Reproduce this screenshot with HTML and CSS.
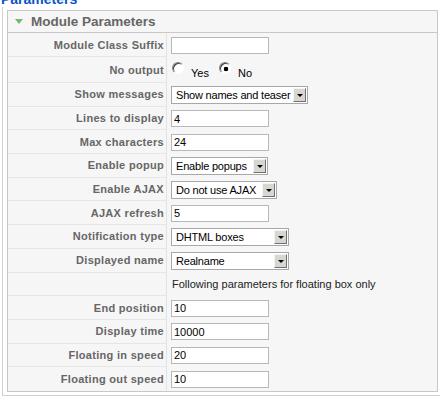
FILE: index.html
```html
<!DOCTYPE html>
<html lang="en">

<head>
    <meta charset="UTF-8" />
    <title>Module Parameters</title>
    <link rel="stylesheet" href="styles.css">
</head>

<body>
    <div class="legend">Parameters</div>
    <div class="fieldset">
        <div class="panel">
            <h3 class="panel-title"><span class="arrow"></span>Module Parameters</h3>
            <div class="params">
                <div class="key">Module Class Suffix</div>
                <div class="value"><input class="text" type="text" value=""></div>

                <div class="key">No output</div>
                <div class="value radios">
                    <input class="radio" type="radio" name="nooutput">
                    <label>Yes</label>
                    <input class="radio" type="radio" name="nooutput" checked>
                    <label>No</label>
                </div>

                <div class="key">Show messages</div>
                <div class="value">
                    <span class="select w-show"><span class="select-text">Show names and teaser</span><span class="select-btn"></span></span>
                </div>

                <div class="key">Lines to display</div>
                <div class="value"><input class="text" type="text" value="4"></div>

                <div class="key">Max characters</div>
                <div class="value"><input class="text" type="text" value="24"></div>

                <div class="key">Enable popup</div>
                <div class="value">
                    <span class="select w-popup"><span class="select-text">Enable popups</span><span class="select-btn"></span></span>
                </div>

                <div class="key">Enable AJAX</div>
                <div class="value">
                    <span class="select w-ajax"><span class="select-text">Do not use AJAX</span><span class="select-btn"></span></span>
                </div>

                <div class="key">AJAX refresh</div>
                <div class="value"><input class="text" type="text" value="5"></div>

                <div class="key">Notification type</div>
                <div class="value">
                    <span class="select w-wide"><span class="select-text">DHTML boxes</span><span class="select-btn"></span></span>
                </div>

                <div class="key">Displayed name</div>
                <div class="value">
                    <span class="select w-wide"><span class="select-text">Realname</span><span class="select-btn"></span></span>
                </div>

                <div class="key"></div>
                <div class="value note">Following parameters for floating box only</div>

                <div class="key">End position</div>
                <div class="value"><input class="text" type="text" value="10"></div>

                <div class="key">Display time</div>
                <div class="value"><input class="text" type="text" value="10000"></div>

                <div class="key">Floating in speed</div>
                <div class="value"><input class="text" type="text" value="20"></div>

                <div class="key last">Floating out speed</div>
                <div class="value"><input class="text" type="text" value="10"></div>
            </div>
        </div>
    </div>
</body>

</html>
```

FILE: styles.css
```css
* {
    margin: 0;
    padding: 0;
    box-sizing: border-box;
}

body {
    font-family: 'Liberation Sans', Arial, sans-serif;
    font-size: 11px;
    background: #fff;
    overflow: hidden;
}

.legend {
    margin-top: -9px;
    height: 16px;
    line-height: 16px;
    padding-left: 1px;
    font-size: 14px;
    font-weight: bold;
    color: #0b55c4;
}

.fieldset {
    width: 460px;
    margin-left: 2px;
    padding: 3px 0 3px 4px;
    border-left: 1px solid #d0d0d0;
    border-bottom: 1px solid #d0d0d0;
}

.panel {
    width: 431px;
    border: 1px solid #c8c8c8;
    background: #f6f6f6;
}

.panel-title {
    display: flex;
    align-items: center;
    height: 22px;
    padding-left: 7px;
    border-bottom: 1px solid #c8c8c8;
    font-size: 13.5px;
    font-weight: bold;
    color: #666;
}

.arrow {
    width: 0;
    height: 0;
    margin-right: 8px;
    border-left: 4px solid transparent;
    border-right: 4px solid transparent;
    border-top: 5px solid #74b874;
}

.params {
    display: grid;
    grid-template-columns: 159px 1fr;
    grid-template-rows: 24px 26px repeat(13, 1fr);
    height: 358px;
}

.key {
    display: flex;
    align-items: center;
    justify-content: flex-end;
    padding-right: 2px;
    border-right: 1px solid #e2e2e2;
    border-bottom: 1px solid #e6e6e6;
    font-weight: bold;
    letter-spacing: 0.3px;
    color: #666;
}

.key.last {
    border-bottom: none;
}

.value {
    display: flex;
    align-items: center;
    padding-left: 4px;
    color: #000;
}

.note {
    padding-left: 5px;
    color: #222;
}

.text {
    width: 98px;
    height: 17px;
    padding: 0 2px;
    border: 1px solid #b8b8b8;
    background: #fff;
    font-family: inherit;
    font-size: 11px;
    color: #000;
    outline: none;
}

.radios {
    padding-left: 5px;
}

.radios label {
    margin-top: 6px;
    margin-right: 10px;
}

.radio {
    appearance: none;
    -webkit-appearance: none;
    width: 12px;
    height: 12px;
    margin: -4px 7px 0 0;
    border-radius: 50%;
    border: 1px solid;
    border-color: #808080 #fff #fff #808080;
    background: #fff;
    box-shadow: inset 1px 1px 0 #404040;
}

.radio:checked {
    background: radial-gradient(circle at 6px 6px, #000 0, #000 2px, #fff 2.6px);
}

.select {
    display: inline-flex;
    align-items: center;
    height: 18px;
    border: 1px solid #a8a8a8;
    background: #fff;
}

.select-text {
    flex: 1;
    padding-left: 4px;
    white-space: nowrap;
    letter-spacing: -0.2px;
}

.select-btn {
    position: relative;
    width: 13px;
    height: 14px;
    margin-right: 1px;
    border: 1px solid;
    border-color: #f4f4f4 #707070 #707070 #f4f4f4;
    background: #d8d6d0;
}

.select-btn::after {
    content: "";
    position: absolute;
    left: 3px;
    top: 5px;
    border-left: 3px solid transparent;
    border-right: 3px solid transparent;
    border-top: 3px solid #000;
}

.w-show {
    width: 137px;
}

.w-popup {
    width: 97px;
}

.w-ajax {
    width: 106px;
}

.w-wide {
    width: 118px;
}
```
